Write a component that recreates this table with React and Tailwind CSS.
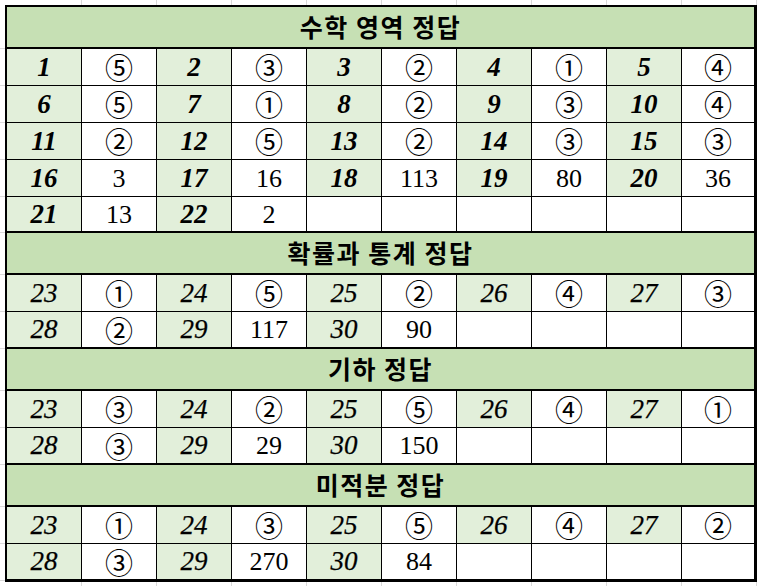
// 정답표 (spreadsheet style)

const sections = [
    {
        title: "수학 영역 정답",
        bold: true,
        rows: [
            [["1", "⑤"], ["2", "③"], ["3", "②"], ["4", "①"], ["5", "④"]],
            [["6", "⑤"], ["7", "①"], ["8", "②"], ["9", "③"], ["10", "④"]],
            [["11", "②"], ["12", "⑤"], ["13", "②"], ["14", "③"], ["15", "③"]],
            [["16", "3"], ["17", "16"], ["18", "113"], ["19", "80"], ["20", "36"]],
            [["21", "13"], ["22", "2"], ["", ""], ["", ""], ["", ""]],
        ],
        grid: "grid-rows-[36px_36px_36px_36px_34px]",
    },
    {
        title: "확률과 통계 정답",
        rows: [
            [["23", "①"], ["24", "⑤"], ["25", "②"], ["26", "④"], ["27", "③"]],
            [["28", "②"], ["29", "117"], ["30", "90"], ["", ""], ["", ""]],
        ],
        grid: "grid-rows-[36px_35px]",
    },
    {
        title: "기하 정답",
        rows: [
            [["23", "③"], ["24", "②"], ["25", "⑤"], ["26", "④"], ["27", "①"]],
            [["28", "③"], ["29", "29"], ["30", "150"], ["", ""], ["", ""]],
        ],
        grid: "grid-rows-[36px_35px]",
    },
    {
        title: "미적분 정답",
        rows: [
            [["23", "①"], ["24", "③"], ["25", "⑤"], ["26", "④"], ["27", "②"]],
            [["28", "③"], ["29", "270"], ["30", "84"], ["", ""], ["", ""]],
        ],
        grid: "grid-rows-[36px_35px]",
    },
];

const cols = [0, 1, 2, 3, 4, 5, 6, 7, 8];

// gray sheet gridlines outside the table
const GridStrip = () => (
    <div className="flex h-[5px] shrink-0">
        <div className="w-[81px] shrink-0" />
        {cols.map((c) => (
            <div key={c} className="w-[75px] shrink-0 border-l border-[#d9d9d9]" />
        ))}
        <div className="w-[2px] shrink-0 border-l border-[#d9d9d9]" />
    </div>
);

const isCircled = (s) => /[①-⑳]/.test(s);

const Section = ({ section }) => {
    return (
        <div className="flex flex-col gap-[2px]">
            {/* green title */}
            <div className="h-[40px] bg-[#c6e0b4] flex items-center justify-center font-[family-name:'Noto_Sans_CJK_KR',sans-serif] font-bold text-[25px] text-black tracking-[1.5px]">
                {section.title}
            </div>
            <div className={"grid grid-cols-[repeat(9,74px)_1fr] gap-px " + section.grid}>
                {section.rows.map((row, ri) =>
                    row.map(([num, ans], ci) => (
                        <div key={ri + "-" + ci} className="contents">
                            <div
                                className={
                                    "flex items-center justify-center italic font-[family-name:'Liberation_Serif',serif] text-[27px] text-black " +
                                    (num ? "bg-[#e2efda] " : "bg-white ") +
                                    (section.bold ? "font-bold" : "font-normal [-webkit-text-stroke:0.25px_black]")
                                }
                            >
                                {num}
                            </div>
                            {isCircled(ans) ? (
                                <div className="flex items-center justify-center bg-white font-[family-name:'Noto_Sans_CJK_KR',sans-serif] text-[28px] text-black">
                                    {ans}
                                </div>
                            ) : (
                                <div className="flex items-center justify-center bg-white font-[family-name:'Liberation_Serif',serif] text-[26px] text-black">
                                    {ans}
                                </div>
                            )}
                        </div>
                    ))
                )}
            </div>
        </div>
    );
};

const App = () => {
    return (
        <main className="w-[758px] h-[586px] bg-white overflow-hidden flex flex-col">
            <GridStrip />

            <div className="flex">
                {/* left gridline strip */}
                <div className="w-[5px] shrink-0 flex flex-col">
                    <div className="h-[44px] border-b border-[#d9d9d9]" />
                    <div className="h-[37px] border-b border-[#d9d9d9]" />
                    <div className="h-[37px] border-b border-[#d9d9d9]" />
                    <div className="h-[37px] border-b border-[#d9d9d9]" />
                    <div className="h-[37px] border-b border-[#d9d9d9]" />
                    <div className="h-[36px] border-b border-[#d9d9d9]" />
                    <div className="h-[42px] border-b border-[#d9d9d9]" />
                    <div className="h-[37px] border-b border-[#d9d9d9]" />
                    <div className="h-[37px] border-b border-[#d9d9d9]" />
                    <div className="h-[42px] border-b border-[#d9d9d9]" />
                    <div className="h-[37px] border-b border-[#d9d9d9]" />
                    <div className="h-[37px] border-b border-[#d9d9d9]" />
                    <div className="h-[42px] border-b border-[#d9d9d9]" />
                    <div className="h-[37px] border-b border-[#d9d9d9]" />
                    <div className="h-[37px] border-b border-[#d9d9d9]" />
                </div>

                {/* answer table */}
                <div className="w-[752px] shrink-0 bg-black border-black border-l-2 border-t-2 border-r-[3px] border-b-[3px] flex flex-col gap-[2px]">
                    {sections.map((s) => (
                        <Section key={s.title} section={s} />
                    ))}
                </div>
            </div>

            <GridStrip />
        </main>
    );
};

export default App;
